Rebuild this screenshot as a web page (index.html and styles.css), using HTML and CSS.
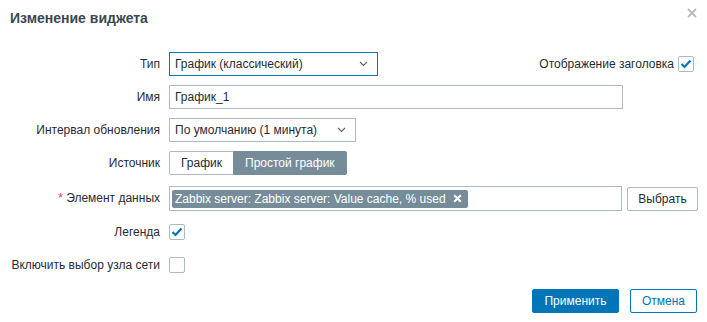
FILE: index.html
```html
<!DOCTYPE html>
<html lang="ru">
<head>
<meta charset="utf-8">
<title>Изменение виджета</title>
<link rel="stylesheet" href="styles.css">
</head>
<body>
<div class="dialog">
  <div class="header">
    <h4 class="title">Изменение виджета</h4>
    <span class="close">
      <svg width="10" height="10" viewBox="0 0 10 10"><path d="M1 1L9 9M9 1L1 9" stroke="#b4bcc1" stroke-width="1.8" fill="none"/></svg>
    </span>
  </div>
  <div class="form">
    <div class="label">Тип</div>
    <div class="field field-split">
      <div class="select select-focus w-type">
        <span>График (классический)</span>
        <svg class="chev" width="9" height="6" viewBox="0 0 9 6"><path d="M1 1L4.5 4.5L8 1" stroke="#5b6770" stroke-width="1.2" fill="none"/></svg>
      </div>
      <div class="header-toggle">
        <span>Отображение заголовка</span>
        <span class="checkbox checked"><svg width="12" height="10" viewBox="0 0 12 10"><path d="M1.5 5L4.5 8L10.5 1.5" stroke="#0275b8" stroke-width="2.2" fill="none"/></svg></span>
      </div>
    </div>

    <div class="label">Имя</div>
    <div class="field">
      <div class="input w-name">График_1</div>
    </div>

    <div class="label">Интервал обновления</div>
    <div class="field">
      <div class="select w-interval">
        <span>По умолчанию (1 минута)</span>
        <svg class="chev" width="9" height="6" viewBox="0 0 9 6"><path d="M1 1L4.5 4.5L8 1" stroke="#5b6770" stroke-width="1.2" fill="none"/></svg>
      </div>
    </div>

    <div class="label">Источник</div>
    <div class="field">
      <div class="segmented">
        <span class="seg">График</span>
        <span class="seg seg-active">Простой график</span>
      </div>
    </div>

    <div class="label label-multi"><span class="req">*</span> Элемент данных</div>
    <div class="field field-multi">
      <div class="multiselect">
        <span class="tag">Zabbix server: Zabbix server: Value cache, % used<svg class="tag-x" width="9" height="9" viewBox="0 0 9 9"><path d="M1.2 1.2L7.8 7.8M7.8 1.2L1.2 7.8" stroke="#ffffff" stroke-width="2" fill="none"/></svg></span>
      </div>
      <button class="btn-alt">Выбрать</button>
    </div>

    <div class="label">Легенда</div>
    <div class="field">
      <span class="checkbox checked"><svg width="12" height="10" viewBox="0 0 12 10"><path d="M1.5 5L4.5 8L10.5 1.5" stroke="#0275b8" stroke-width="2.2" fill="none"/></svg></span>
    </div>

    <div class="label">Включить выбор узла сети</div>
    <div class="field">
      <span class="checkbox"></span>
    </div>
  </div>
  <div class="footer">
    <button class="btn-primary">Применить</button>
    <button class="btn-secondary">Отмена</button>
  </div>
</div>
</body>
</html>
```

FILE: styles.css
```css
html, body {
  margin: 0;
  padding: 0;
  background: #ffffff;
}
body {
  font-family: "Liberation Sans", Arial, sans-serif;
  font-size: 12px;
  color: #1f2c33;
}
.dialog {
  width: 707px;
  height: 322px;
  box-sizing: border-box;
  padding: 10px 10px 0 10px;
}
.header {
  position: relative;
  height: 16px;
}
.title {
  margin: 0;
  font-size: 14px;
  font-weight: bold;
  line-height: 16px;
  color: #3a4852;
}
.close {
  position: absolute;
  right: 0;
  top: -2px;
  width: 10px;
  height: 10px;
  display: flex;
}
.form {
  margin-top: 26px;
  display: grid;
  grid-template-columns: 150px 1fr;
  column-gap: 9px;
  row-gap: 9px;
}
.label {
  text-align: right;
  line-height: 24px;
  height: 24px;
  white-space: nowrap;
}
.label-multi {
  margin-top: 2px;
  line-height: 25px;
  height: 25px;
}
.req {
  color: #e33734;
}
.field {
  display: flex;
  align-items: center;
  min-height: 24px;
}
.field-split {
  justify-content: space-between;
  padding-right: 4px;
}
.select, .input {
  box-sizing: border-box;
  height: 24px;
  border: 1px solid #acbbc2;
  background: #ffffff;
  padding: 0 5px;
  display: flex;
  align-items: center;
  justify-content: space-between;
  line-height: 22px;
}
.select-focus {
  border-color: #0275b8;
}
.w-type { width: 209px; }
.w-name { width: 454px; }
.w-interval { width: 187px; }
.chev {
  margin-right: 4px;
}
.header-toggle {
  display: flex;
  align-items: center;
  gap: 4px;
}
.checkbox {
  box-sizing: border-box;
  width: 16px;
  height: 16px;
  border: 1px solid #acbbc2;
  border-radius: 2px;
  background: #ffffff;
  display: flex;
  align-items: center;
  justify-content: center;
}
.segmented {
  display: flex;
  height: 24px;
}
.seg {
  box-sizing: border-box;
  height: 24px;
  line-height: 22px;
  border: 1px solid #acbbc2;
  padding: 0 11px;
  background: #ffffff;
}
.seg:first-child {
  border-radius: 2px 0 0 2px;
  border-right: none;
}
.seg-active {
  background: #768d99;
  border-color: #768d99;
  color: #ffffff;
  border-radius: 0 2px 2px 0;
}
.field-multi {
  margin-top: 2px;
  min-height: 25px;
  gap: 5px;
}
.multiselect {
  box-sizing: border-box;
  width: 453px;
  height: 25px;
  border: 1px solid #acbbc2;
  padding: 2px 2px;
  display: flex;
  align-items: center;
}
.tag {
  height: 18px;
  line-height: 18px;
  background: #768d99;
  color: #ffffff;
  border-radius: 2px;
  padding: 0 6px 0 3px;
  display: flex;
  align-items: center;
  gap: 7px;
  white-space: nowrap;
}
.btn-alt {
  box-sizing: border-box;
  width: 71px;
  height: 24px;
  border: 1px solid #acbbc2;
  background: #ffffff;
  color: #1f2c33;
  font-family: inherit;
  font-size: 12px;
  border-radius: 2px;
  padding: 0;
}
.footer {
  margin-top: 12px;
  display: flex;
  justify-content: flex-end;
  gap: 11px;
}
.btn-primary, .btn-secondary {
  box-sizing: border-box;
  height: 24px;
  font-family: inherit;
  font-size: 12px;
  border-radius: 2px;
  padding: 0;
}
.btn-primary {
  width: 87px;
  background: #0275b8;
  border: 1px solid #0275b8;
  color: #ffffff;
}
.btn-secondary {
  width: 67px;
  background: #ffffff;
  border: 1px solid #0275b8;
  color: #0275b8;
}
```
